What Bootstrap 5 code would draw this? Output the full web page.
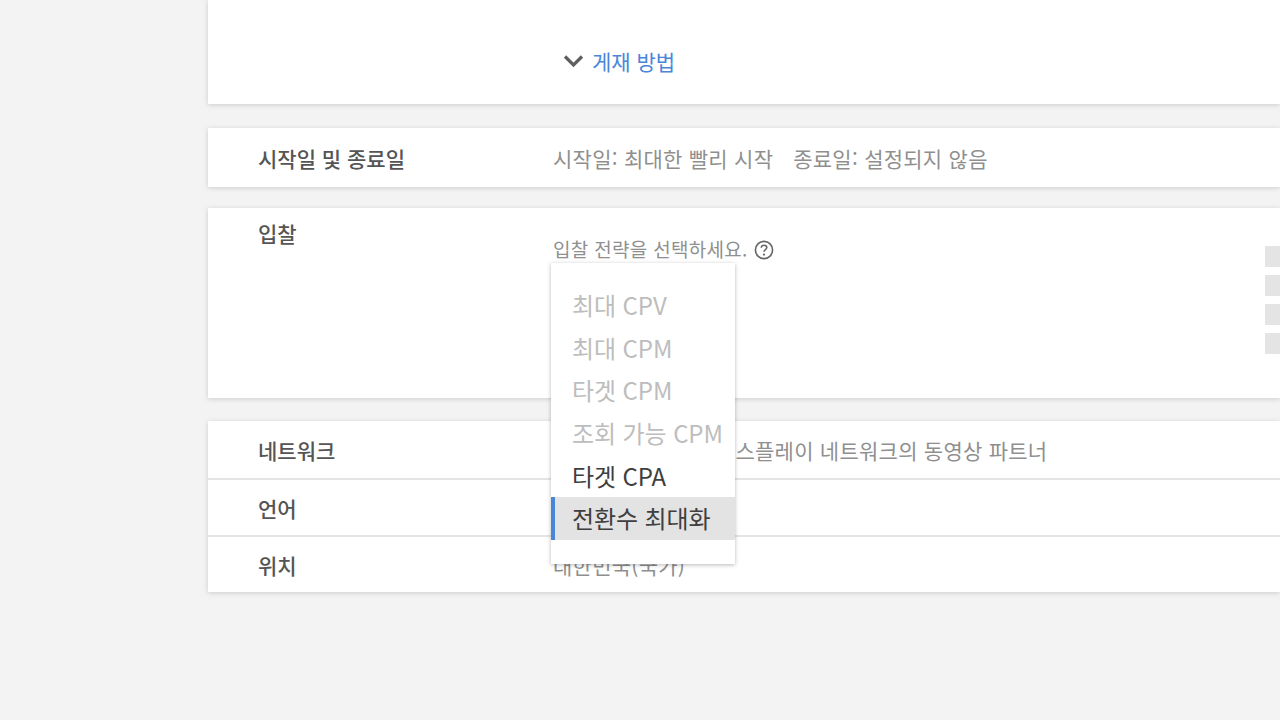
<!DOCTYPE html>
<html lang="ko">
<head>
<meta charset="utf-8">
<title>캠페인 설정</title>
<link href="https://cdn.jsdelivr.net/npm/bootstrap@5.3.0/dist/css/bootstrap.min.css" rel="stylesheet">
<style>
html,body{height:720px;overflow:hidden}
body{background:#f3f3f3;font-family:"Noto Sans CJK KR","Noto Sans",sans-serif;color:#4d4d4d}
.page-wrap{margin-left:208px;padding-right:0}
.panel{background:#fff;box-shadow:0 1px 5px rgba(0,0,0,.16)}
.panel-placement{height:104px;margin-bottom:24px;padding-left:355px;padding-top:45px}
.panel-dates{height:59px;margin-bottom:21px}
.panel-bid{height:190px;margin-bottom:23px;padding-top:10px}
.field-row{padding-left:50px}
.field-label{width:295px;flex:none;font-size:21px;font-weight:500;color:#555;line-height:30px}
.field-value{font-size:21px;color:#8f8f8f;line-height:30px;white-space:nowrap;letter-spacing:.25px}
.method-link{font-size:21px;line-height:32px;color:#4a86d8;text-decoration:none}
.bid-col{padding-top:16px;width:712px;flex:none}
.bid-hint{font-size:19px;line-height:30px;color:#8f8f8f;letter-spacing:.3px}
.help-icon{margin-left:6px;vertical-align:-3px}
.bid-menu{position:absolute;left:-2px;top:45px;width:184px;height:301px;background:#fff;box-shadow:0 1px 4px rgba(0,0,0,.28);padding-top:21px;z-index:5;--bs-dropdown-border-width:0;border-radius:0}
.bid-item{height:42.7px;line-height:42.7px;padding:0 0 0 21px;font-size:24px;color:#3f3f3f;white-space:nowrap;display:block;letter-spacing:-.1px}
.bid-item.is-off{color:#bdbdbd}
.bid-item.is-on{background:#e3e3e3;border-left:4px solid #4a86d8;padding-left:17px}
.side-marks{width:15px;padding-top:28px}
.side-mark{width:15px;height:21px;background:#e4e4e4}
.net-row{height:57px}
.net-row + .net-row{border-top:2px solid #e4e4e4}
.panel-dates .field-row,.net-row{align-items:center}
.panel-dates .field-row{height:59px}
.date-gap{margin-left:20px}
.net-prefix{letter-spacing:.25px}
</style>
</head>
<body>
<div class="page-wrap">
  <section class="panel panel-placement">
    <div class="d-flex align-items-center gap-2">
      <svg width="21" height="14" viewBox="0 0 21 14" aria-hidden="true"><path d="M2 2.5l8.5 8.5L19 2.5" fill="none" stroke="#5f5f5f" stroke-width="3.2"/></svg>
      <a class="method-link" href="#">게재 방법</a>
    </div>
  </section>

  <section class="panel panel-dates">
    <div class="field-row d-flex">
      <div class="field-label">시작일 및 종료일</div>
      <div class="field-value">시작일: 최대한 빨리 시작<span class="date-gap">종료일: 설정되지 않음</span></div>
    </div>
  </section>

  <section class="panel panel-bid">
    <div class="field-row d-flex">
      <div class="field-label">입찰</div>
      <div class="bid-col position-relative">
        <div class="bid-hint">입찰 전략을 선택하세요.<svg class="help-icon" width="20" height="20" viewBox="0 0 20 20" aria-hidden="true"><circle cx="10" cy="10" r="8.6" fill="none" stroke="#666" stroke-width="1.6"/><path d="M7.3 7.8c0-1.6 1.2-2.6 2.8-2.6s2.7 1 2.7 2.3c0 2-2.8 2.1-2.8 4.3" fill="none" stroke="#666" stroke-width="1.6"/><circle cx="10" cy="14.6" r="1.1" fill="#666"/></svg></div>
        <div class="bid-menu dropdown-menu d-block">
          <a class="bid-item is-off text-decoration-none" href="#">최대 CPV</a>
          <a class="bid-item is-off text-decoration-none" href="#">최대 CPM</a>
          <a class="bid-item is-off text-decoration-none" href="#">타겟 CPM</a>
          <a class="bid-item is-off text-decoration-none" href="#">조회 가능 CPM</a>
          <a class="bid-item text-decoration-none" href="#">타겟 CPA</a>
          <a class="bid-item is-on text-decoration-none" href="#">전환수 최대화</a>
        </div>
      </div>
      <div class="side-marks d-flex flex-column gap-2 flex-none">
        <div class="side-mark"></div><div class="side-mark"></div><div class="side-mark"></div><div class="side-mark"></div>
      </div>
    </div>
  </section>

  <section class="panel">
    <div class="net-row field-row d-flex">
      <div class="field-label">네트워크</div>
      <div class="field-value">YouTube 동영상, 디스플레이 네트워크의 동영상 파트너</div>
    </div>
    <div class="net-row field-row d-flex">
      <div class="field-label">언어</div>
      <div class="field-value">한국어</div>
    </div>
    <div class="net-row field-row d-flex">
      <div class="field-label">위치</div>
      <div class="field-value">대한민국(국가)</div>
    </div>
  </section>
</div>
<script src="https://cdn.jsdelivr.net/npm/bootstrap@5.3.0/dist/js/bootstrap.bundle.min.js"></script>
</body>
</html>
